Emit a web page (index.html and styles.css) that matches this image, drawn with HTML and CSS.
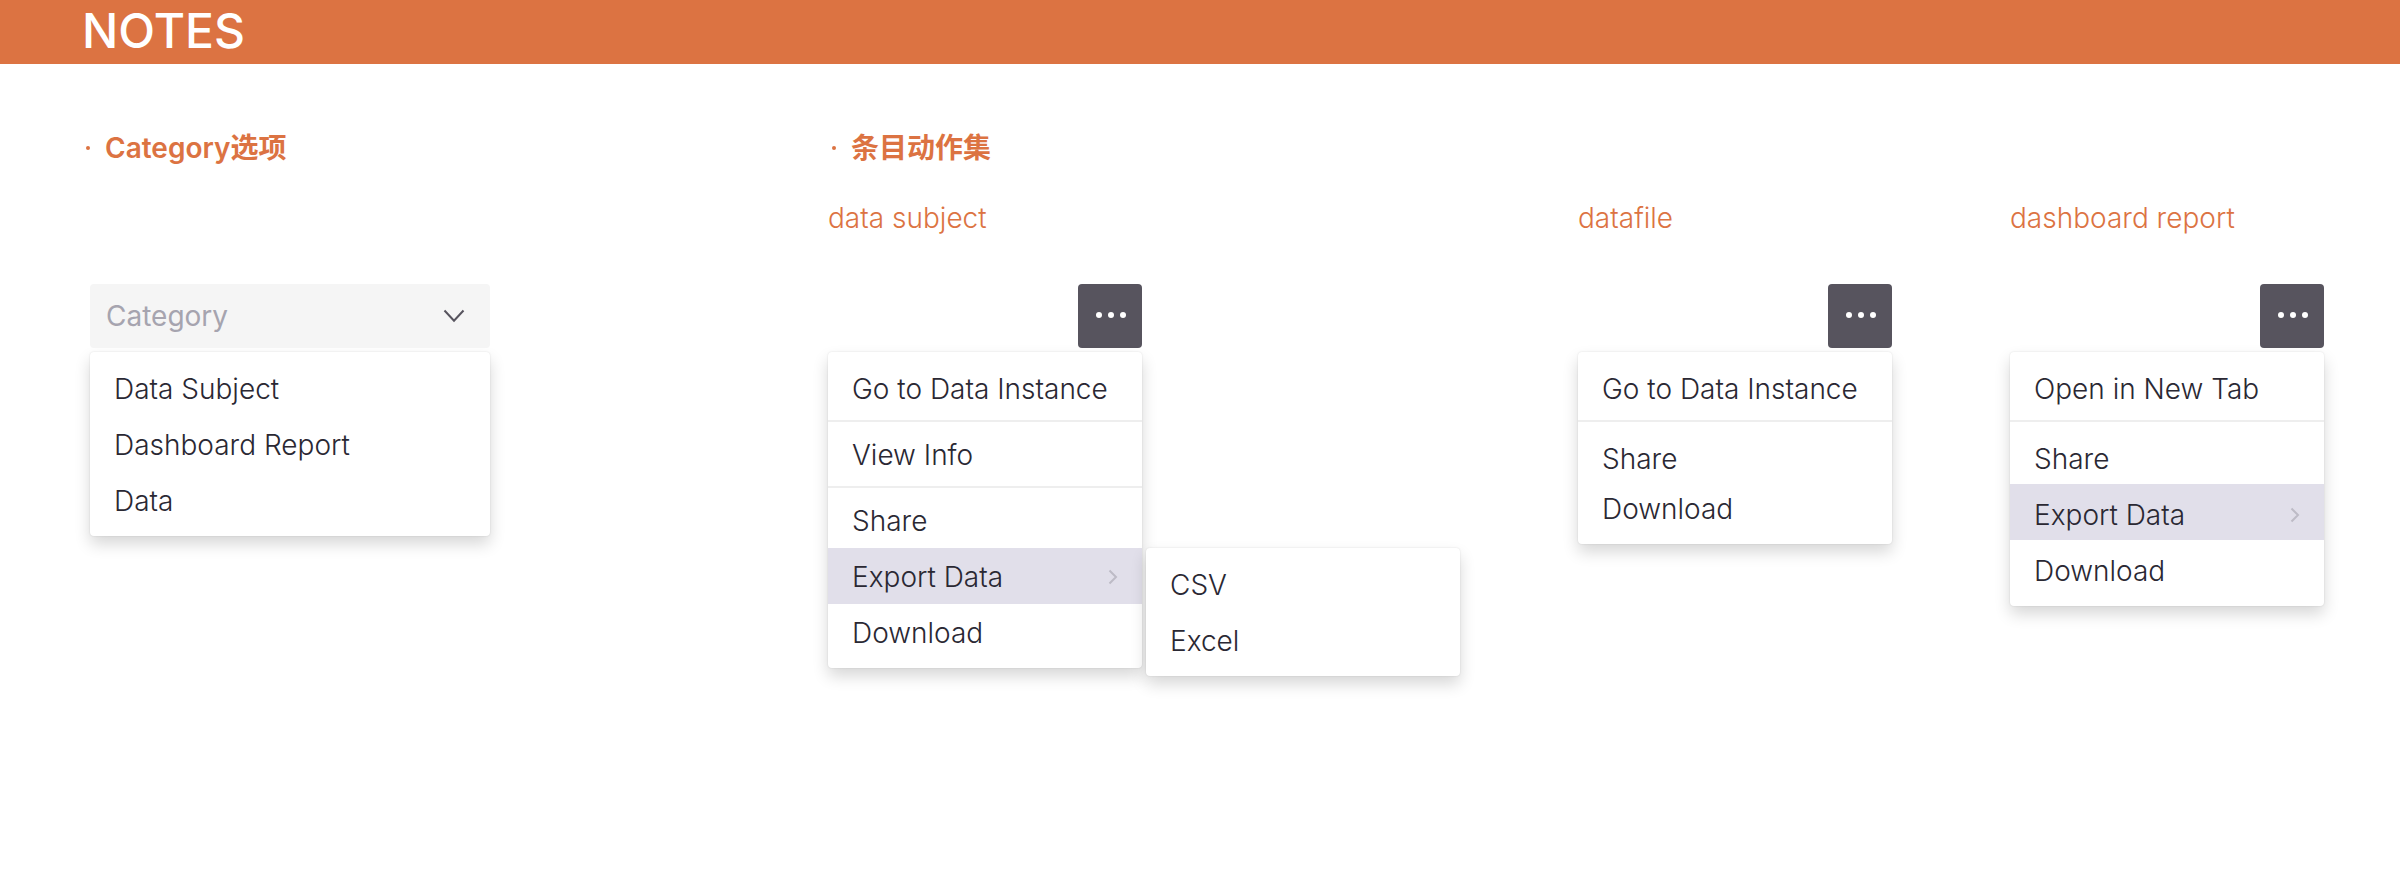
FILE: index.html
```html
<!DOCTYPE html>
<html lang="zh-CN">
<head>
<meta charset="utf-8">
<meta name="viewport" content="width=device-width, initial-scale=1">
<title>Notes</title>
<link rel="stylesheet" href="styles.css">
</head>
<body>
<header class="banner"><h1 class="banner-title">NOTES</h1></header>
<main class="board">
  <section class="section">
    <h2 class="section-title"><span class="bullet"></span><label for="category">Category选项</label></h2>
    <div class="picker">
      <div class="select-wrap">
        <select class="select" id="category"><option>Category</option></select>
        <svg class="select-arrow" viewBox="0 0 22 14" aria-hidden="true"><path d="M1.5 1.5 11 11.8 20.5 1.5"/></svg>
      </div>
      <div class="menu">
        <div class="group first last">
          <button class="item" type="button">Data Subject</button>
          <button class="item" type="button">Dashboard Report</button>
          <button class="item" type="button">Data</button>
        </div>
      </div>
    </div>
  </section>
  <section class="section">
    <h2 class="section-title"><span class="bullet"></span>条目动作集</h2>
    <div class="cases">
      <div class="case">
        <h3 class="case-title">data subject</h3>
        <button class="more" type="button" aria-label="More actions"><svg class="dots" viewBox="0 0 64 64" aria-hidden="true"><circle cx="21" cy="31" r="3"/><circle cx="33" cy="31" r="3"/><circle cx="45" cy="31" r="3"/></svg></button>
        <div class="menu">
          <div class="group first"><button class="item" type="button">Go to Data Instance</button></div>
          <div class="group"><button class="item" type="button">View Info</button></div>
          <div class="group last">
            <button class="item" type="button">Share</button>
            <div class="parent">
              <button class="item active" type="button">Export Data<svg class="chevron" viewBox="0 0 10 16" aria-hidden="true"><path d="M1.5 1.5 8 8 1.5 14.5"/></svg></button>
              <div class="menu submenu">
                <div class="group first last">
                  <button class="item" type="button">CSV</button>
                  <button class="item" type="button">Excel</button>
                </div>
              </div>
            </div>
            <button class="item" type="button">Download</button>
          </div>
        </div>
      </div>
      <div class="case">
        <h3 class="case-title">datafile</h3>
        <button class="more" type="button" aria-label="More actions"><svg class="dots" viewBox="0 0 64 64" aria-hidden="true"><circle cx="21" cy="31" r="3"/><circle cx="33" cy="31" r="3"/><circle cx="45" cy="31" r="3"/></svg></button>
        <div class="menu">
          <div class="group first"><button class="item" type="button">Go to Data Instance</button></div>
          <div class="group compact">
            <button class="item" type="button">Share</button>
            <button class="item" type="button">Download</button>
          </div>
        </div>
      </div>
      <div class="case">
        <h3 class="case-title">dashboard report</h3>
        <button class="more" type="button" aria-label="More actions"><svg class="dots" viewBox="0 0 64 64" aria-hidden="true"><circle cx="21" cy="31" r="3"/><circle cx="33" cy="31" r="3"/><circle cx="45" cy="31" r="3"/></svg></button>
        <div class="menu">
          <div class="group first"><button class="item" type="button">Open in New Tab</button></div>
          <div class="group lowered">
            <button class="item" type="button">Share</button>
            <button class="item active" type="button">Export Data<svg class="chevron" viewBox="0 0 10 16" aria-hidden="true"><path d="M1.5 1.5 8 8 1.5 14.5"/></svg></button>
            <button class="item" type="button">Download</button>
          </div>
        </div>
      </div>
    </div>
  </section>
</main>
</body>
</html>
```
FILE: styles.css
```css
* { box-sizing: border-box; }

body {
  margin: 0;
  background: #fff;
  color: #2a2833;
  font-family: Inter, "Noto Sans CJK SC", sans-serif;
  font-size: 28px;
  line-height: 32px;
}

button, select {
  font: inherit;
  color: inherit;
  border: 0;
  margin: 0;
}

.banner {
  background: #dc7342;
  color: #fff;
  padding: 0 82px 2px;
}

.banner-title {
  margin: 0;
  font-size: 48px;
  font-weight: 500;
  line-height: 62px;
}

.board {
  display: grid;
  grid-template-columns: 746fr 1496fr;
  padding: 64px 76px 64px 82px;
}

.section-title {
  display: flex;
  align-items: center;
  margin: 0;
  height: 40px;
  color: #dc7342;
  font-size: 28px;
  font-weight: 600;
}

.bullet {
  width: 4px;
  height: 4px;
  margin: 0 15px 0 4px;
  border-radius: 50%;
  background: currentColor;
}

.picker {
  width: 400px;
  margin: 116px 0 0 8px;
}

.select-wrap {
  position: relative;
}

.select {
  display: block;
  width: 100%;
  height: 64px;
  padding: 0 16px;
  appearance: none;
  border-radius: 4px;
  background: #f5f5f5;
  color: #a6a4af;
}

.select-arrow {
  position: absolute;
  top: 25px;
  right: 25px;
  width: 22px;
  height: 14px;
  fill: none;
  stroke: #57545e;
  stroke-width: 2;
  pointer-events: none;
}

.cases {
  display: grid;
  grid-template-columns: 750fr 432fr 314fr;
}

.case {
  display: flex;
  flex-direction: column;
  width: 314px;
  padding-top: 30px;
}

.case-title {
  margin: 0;
  color: #dc7342;
  font-size: 28px;
  font-weight: 300;
  line-height: 40px;
}

.more {
  align-self: flex-end;
  width: 64px;
  height: 64px;
  margin-top: 46px;
  padding: 0;
  border-radius: 4px;
  background: #57545e;
}

.dots {
  display: block;
  fill: #fff;
}

.menu {
  margin-top: 4px;
  border-radius: 4px;
  background: #fff;
  box-shadow: 0 8px 16px rgba(0, 0, 0, 0.16), 0 0 2px rgba(0, 0, 0, 0.12);
}

.group {
  padding: 4px 0;
}

.group + .group {
  border-top: 2px solid #eee;
}

.group.first { padding-top: 8px; }
.group.last { padding-bottom: 8px; }
.group.compact { padding: 11px 0; }
.group.lowered { padding: 6px 0 10px; }

.item {
  display: flex;
  align-items: center;
  justify-content: space-between;
  width: 100%;
  height: 56px;
  padding: 1px 24px 0;
  background: none;
  font-weight: 300;
  text-align: left;
  white-space: nowrap;
}

.compact .item { height: 50px; }
.lowered .item { padding-top: 5px; }
.item.active { background: #e1dfea; }

.chevron {
  width: 10px;
  height: 16px;
  fill: none;
  stroke: #bdbbc6;
  stroke-width: 2;
}

.parent {
  position: relative;
}

.submenu {
  position: absolute;
  top: 0;
  left: calc(100% + 4px);
  width: 100%;
  margin-top: 0;
}
```
